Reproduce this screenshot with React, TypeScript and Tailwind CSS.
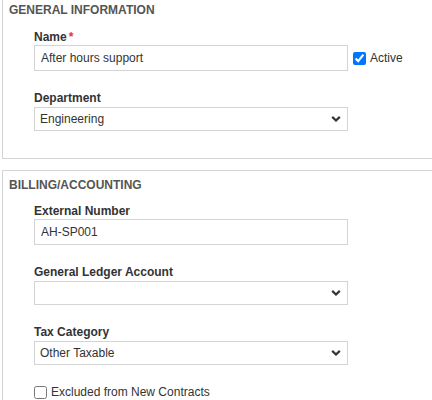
import React from 'react';

const font = { fontFamily: '"Liberation Sans", Arial, sans-serif' };

const Chevron = () => (
  <svg className="pointer-events-none absolute right-[7px] top-1/2 -translate-y-1/2" width="10" height="7" viewBox="0 0 10 7">
    <path d="M1.2 1.4 L5 5 L8.8 1.4" fill="none" stroke="#333" strokeWidth="2.2" />
  </svg>
);

const Label = ({ children, required, className = '' }: { children: React.ReactNode; required?: boolean; className?: string }) => (
  <div className={`h-[16px] text-[12px] font-bold leading-[16px] text-[#333] ${className}`}>
    {children}
    {required && <span className="ml-[2px] text-[#e2324a]">*</span>}
  </div>
);

const TextInput = ({ value }: { value: string }) => (
  <input
    readOnly
    value={value}
    className="box-border h-[26px] w-[314px] border border-[#d4d4d4] bg-white px-[6px] text-[12px] text-[#333] outline-none"
    style={font}
  />
);

const Select = ({ value, options }: { value: string; options: string[] }) => (
  <div className="relative w-[314px]">
    <select
      value={value}
      onChange={() => {}}
      className="box-border h-[24px] w-full appearance-none border border-[#d4d4d4] bg-white pl-[5px] text-[12px] text-[#333] outline-none"
      style={font}
    >
      {options.map((o) => (
        <option key={o} value={o}>
          {o}
        </option>
      ))}
    </select>
    <Chevron />
  </div>
);

const Header = ({ title }: { title: string }) => (
  <div className="h-[16px] pl-[6px] text-[12px] font-bold uppercase leading-[16px] text-[#555]">{title}</div>
);

export default function App() {
  return (
    <div className="h-[400px] w-[432px] overflow-hidden bg-white" style={font}>
      {/* General information */}
      <section className="ml-[2px] border-b border-l border-[#d4d4d4] pb-[27px] pt-[2px]">
        <Header title="General Information" />
        <div className="pl-[31px]">
          <Label required className="mt-[11px]">
            Name
          </Label>
          <div className="flex items-center">
            <TextInput value="After hours support" />
            <label className="ml-[5px] flex items-center gap-[4px] text-[12px] text-[#333]">
              <input type="checkbox" defaultChecked className="m-0 h-[13px] w-[13px] accent-[#0075ff]" />
              Active
            </label>
          </div>
          <Label className="mt-[19px]">Department</Label>
          <Select value="Engineering" options={['Engineering', 'Sales', 'Support']} />
        </div>
      </section>

      {/* Billing / accounting */}
      <section className="ml-[2px] mt-[11px] border-l border-t border-[#d4d4d4] pt-[6px]">
        <Header title="Billing/Accounting" />
        <div className="pl-[31px]">
          <Label className="mt-[10px]">External Number</Label>
          <TextInput value="AH-SP001" />
          <Label className="mt-[19px]">General Ledger Account</Label>
          <Select value="" options={['']} />
          <Label className="mt-[19px]">Tax Category</Label>
          <Select value="Other Taxable" options={['Other Taxable', 'Non-Taxable']} />
          <label className="mt-[19px] flex h-[16px] items-center gap-[4px] text-[12px] text-[#333]">
            <input type="checkbox" className="m-0 h-[13px] w-[13px]" />
            Excluded from New Contracts
          </label>
        </div>
      </section>
    </div>
  );
}
